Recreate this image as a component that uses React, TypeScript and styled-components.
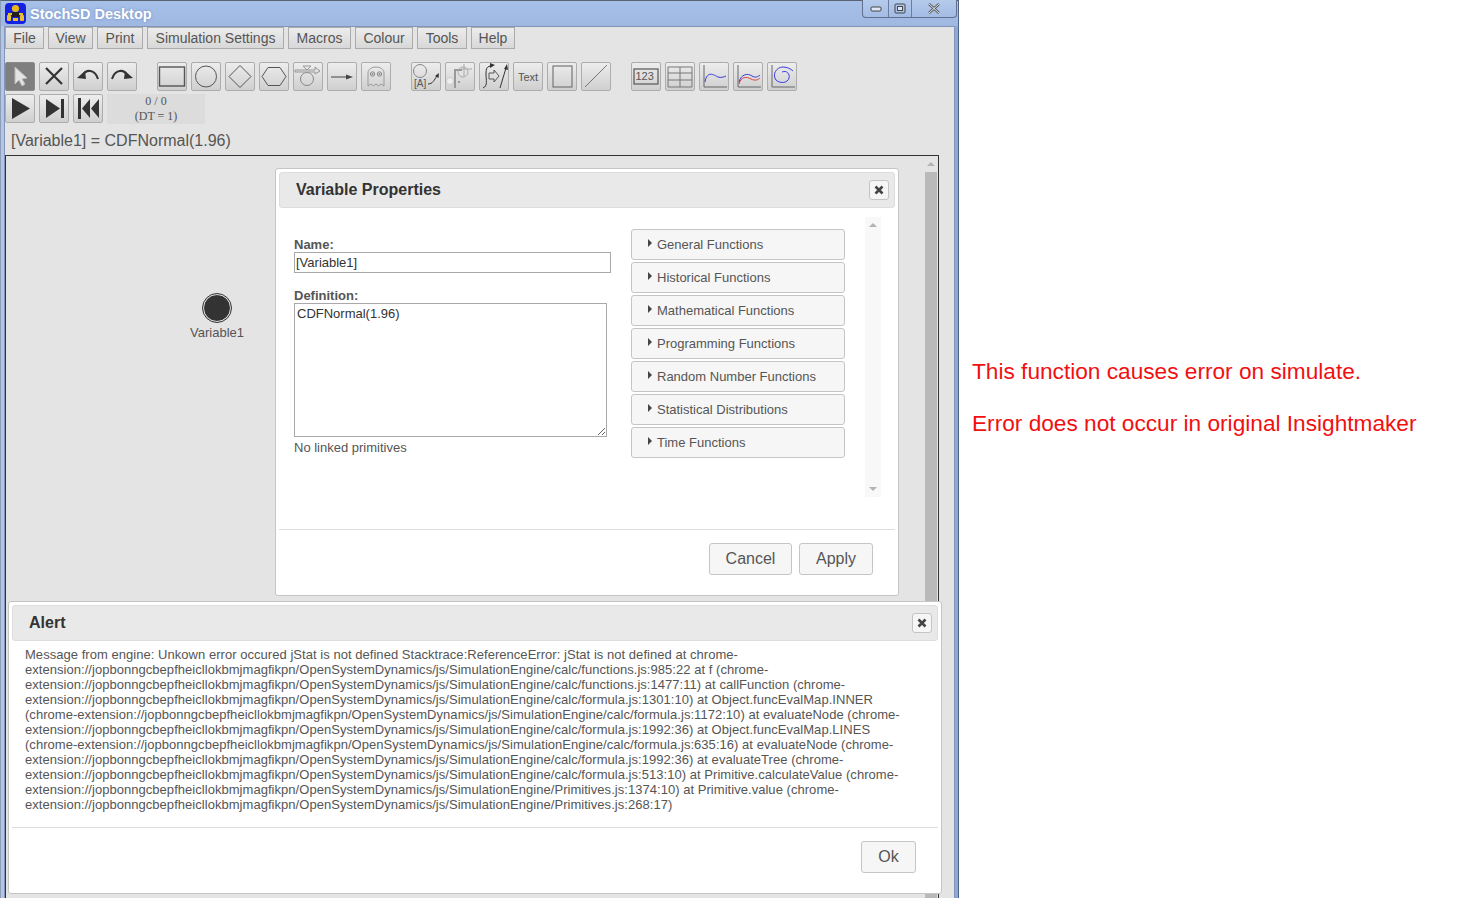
import React from 'react'
import styled, { createGlobalStyle } from 'styled-components'

const GlobalStyle = createGlobalStyle`
    html, body { margin: 0; padding: 0; background: #fff; }
    body { font-family: "Liberation Sans", Arial, sans-serif; overflow: hidden; }
`

const Page = styled.div`
    display: flex;
    width: 1462px;
    height: 898px;
    overflow: hidden;
`

const AppWindow = styled.div`
    position: relative;
    flex: 0 0 959px;
    height: 898px;
    display: flex;
    flex-direction: column;
    box-sizing: border-box;
    background: linear-gradient(90deg, #b4c6e6 0, #b4c6e6 3px, #8ea8da 3px);
    border-top: 1px solid #5a6472;
    border-left: 1px solid #8d9cb8;
    border-right: 1px solid #4f6185;
`

const TitleBar = styled.div`
    position: relative;
    flex: 0 0 25px;
    display: flex;
    align-items: center;
    padding-left: 4px;
    gap: 4px;
    background: linear-gradient(#a7c0e8, #9fb8e2);
`

const TitleText = styled.span`
    font-size: 14.5px;
    font-weight: bold;
    color: #fff;
    text-shadow: 0 0 3px #6f8cc0;
`

const WinButtons = styled.div`
    position: absolute;
    top: -1px;
    right: 1px;
    width: 95px;
    height: 18px;
    display: flex;
    box-sizing: border-box;
    border: 1px solid #61708c;
    border-top: none;
    border-radius: 0 0 4px 4px;
    background: linear-gradient(#b5cbec, #a3bce4);
`

const WinButton = styled.div<{ $w: number; $sep?: boolean }>`
    width: ${p => p.$w}px;
    display: flex;
    align-items: center;
    justify-content: center;
    box-sizing: border-box;
    border-right: ${p => (p.$sep ? '1px solid #6d7e9c' : 'none')};
`

const Client = styled.div`
    flex: 1;
    min-height: 0;
    display: flex;
    flex-direction: column;
    margin: 0 3px 0 3px;
    background: #e4e4e4;
    border: 1px solid #8296bb;
    border-bottom: none;
`

const MenuBar = styled.div`
    display: flex;
    gap: 4px;
    height: 22px;
`

const MenuButton = styled.button<{ $w: number }>`
    width: ${p => p.$w}px;
    height: 22px;
    box-sizing: border-box;
    padding: 0;
    border: 1px solid #ababab;
    background: linear-gradient(#ececec, #d8d8d8);
    color: #555;
    font: 14px "Liberation Sans", Arial, sans-serif;
`

const ToolRow = styled.div<{ $top: number }>`
    display: flex;
    gap: 4px;
    height: 29px;
    margin-top: ${p => p.$top}px;
`

const ToolButton = styled.button<{ $active?: boolean; $gapLeft?: number }>`
    flex: 0 0 30px;
    height: 29px;
    padding: 0;
    margin-left: ${p => p.$gapLeft || 0}px;
    box-sizing: border-box;
    display: flex;
    align-items: center;
    justify-content: center;
    border: 1px solid ${p => (p.$active ? '#8a8a8a' : '#adadad')};
    border-radius: 2px;
    background: ${p => (p.$active ? '#7f7f7f' : 'linear-gradient(#ededed, #cfcfcf)')};
    color: #555;
    font: 11px "Liberation Sans", Arial, sans-serif;
`

const TimeBox = styled.div`
    flex: 0 0 98px;
    height: 30px;
    background: #dcdcdc;
    color: #555;
    font: 12px/15px "Liberation Serif", "Times New Roman", serif;
    text-align: center;
`

const Status = styled.div`
    height: 32px;
    box-sizing: border-box;
    padding: 3px 0 0 6px;
    font-size: 16px;
    line-height: 29px;
    color: #555;
`

const Canvas = styled.div`
    flex: 1;
    min-height: 0;
    width: 934px;
    box-sizing: border-box;
    display: flex;
    border-top: 1px solid #333;
    border-left: 1px solid #333;
    border-right: 1px solid #333;
`

const Diagram = styled.div`
    position: relative;
    flex: 1;
`

const VariableNode = styled.div`
    position: absolute;
    left: 170px;
    top: 138px;
    width: 82px;
    display: flex;
    flex-direction: column;
    align-items: center;
    color: #555;
    font-size: 13px;
    line-height: 16px;
`

const NodeDot = styled.div`
    width: 26px;
    height: 26px;
    margin-bottom: 3px;
    border-radius: 50%;
    background: #333;
    border: 1px solid #e4e4e4;
    outline: 1px solid #333;
`

const ScrollTrack = styled.div`
    flex: 0 0 15px;
    display: flex;
    flex-direction: column;
    align-items: center;
`

const ScrollArrow = styled.div<{ $up?: boolean }>`
    flex: 0 0 16px;
    display: flex;
    align-items: center;
    justify-content: center;
    &::before {
        content: '';
        border-left: 4px solid transparent;
        border-right: 4px solid transparent;
        ${p => (p.$up ? 'border-bottom: 4px solid #b4b4b4;' : 'border-top: 4px solid #b4b4b4;')}
    }
`

const ScrollThumb = styled.div`
    flex: 1;
    width: 12px;
    background: #b9b9b9;
`

const Dialog = styled.div<{ $x: number; $y: number; $w: number; $h: number }>`
    position: absolute;
    left: ${p => p.$x}px;
    top: ${p => p.$y}px;
    width: ${p => p.$w}px;
    height: ${p => p.$h}px;
    box-sizing: border-box;
    display: flex;
    flex-direction: column;
    padding: 3px;
    background: #fff;
    border: 1px solid #c5c5c5;
    border-radius: 3px;
`

const DialogHeader = styled.div<{ $pad: number }>`
    flex: 0 0 36px;
    box-sizing: border-box;
    display: flex;
    align-items: center;
    justify-content: space-between;
    padding: 0 5px 0 ${p => p.$pad}px;
    background: #e9e9e9;
    border: 1px solid #ddd;
    border-radius: 3px;
`

const DialogTitle = styled.span`
    font-size: 16px;
    font-weight: bold;
    color: #333;
`

const CloseButton = styled.button`
    width: 20px;
    height: 20px;
    padding: 0;
    box-sizing: border-box;
    display: flex;
    align-items: center;
    justify-content: center;
    background: #f6f6f6;
    border: 1px solid #c5c5c5;
    border-radius: 3px;
`

const PropsBody = styled.div`
    flex: 1;
    min-height: 0;
    display: flex;
    padding: 9px 15px 0 15px;
`

const FormColumn = styled.div`
    flex: 0 0 317px;
    padding-top: 20px;
    font-size: 13px;
    color: #555;
`

const FieldLabel = styled.label`
    display: block;
    font-weight: bold;
    font-size: 13px;
    line-height: 15px;
    color: #555;
`

const NameInput = styled.input`
    display: block;
    width: 317px;
    height: 21px;
    box-sizing: border-box;
    padding: 0 1px;
    margin: 0 0 15px;
    border: 1px solid #a9a9a9;
    outline: none;
    color: #333;
    font: 13px "Liberation Sans", Arial, sans-serif;
`

const DefinitionInput = styled.textarea`
    display: block;
    width: 313px;
    height: 134px;
    box-sizing: border-box;
    padding: 2px;
    margin: 0;
    border: 1px solid #a9a9a9;
    outline: none;
    color: #333;
    font: 13px "Liberation Sans", Arial, sans-serif;
`

const LinkedNote = styled.div`
    margin-top: 3px;
    line-height: 15px;
`

const FunctionList = styled.div`
    flex: 0 0 214px;
    margin: 12px 0 0 20px;
    display: flex;
    flex-direction: column;
    gap: 2px;
`

const FunctionHeader = styled.div`
    height: 31px;
    box-sizing: border-box;
    display: flex;
    align-items: center;
    padding: 0 0 1px 16px;
    gap: 5px;
    background: #f6f6f6;
    border: 1px solid #c5c5c5;
    border-radius: 3px;
    color: #555;
    font-size: 13px;
`

const Caret = styled.span`
    width: 0;
    height: 0;
    margin-top: -2px;
    border-top: 4px solid transparent;
    border-bottom: 4px solid transparent;
    border-left: 4px solid #454545;
`

const InnerScroll = styled.div`
    flex: 0 0 16px;
    height: 280px;
    margin-left: 20px;
    display: flex;
    flex-direction: column;
    justify-content: space-between;
    background: #f8f8f8;
`

const DialogFooter = styled.div<{ $h: number; $pad: number }>`
    flex: 0 0 ${p => p.$h}px;
    box-sizing: border-box;
    display: flex;
    justify-content: flex-end;
    align-items: flex-start;
    gap: 7px;
    padding: 13px ${p => p.$pad}px 0 0;
    border-top: 1px solid #ddd;
`

const ActionButton = styled.button<{ $w: number }>`
    width: ${p => p.$w}px;
    height: 32px;
    padding: 0;
    background: #f6f6f6;
    border: 1px solid #c5c5c5;
    border-radius: 3px;
    color: #555;
    font: 16px "Liberation Sans", Arial, sans-serif;
`

const AlertBody = styled.div`
    flex: 1;
    padding: 6px 0 0 13px;
    font-size: 13px;
    line-height: 15px;
    letter-spacing: 0.04px;
    color: #555;
`

const AlertLine = styled.div`
    white-space: nowrap;
`

const Notes = styled.div`
    flex: 1;
    padding: 354px 0 0 13px;
    color: #f01010;
    font-size: 22.67px;
    line-height: 34px;
`

const Note = styled.div`
    margin-bottom: 18px;
    white-space: nowrap;
`

const menus: [string, number][] = [
    ['File', 39],
    ['View', 45],
    ['Print', 46],
    ['Simulation Settings', 137],
    ['Macros', 63],
    ['Colour', 58],
    ['Tools', 50],
    ['Help', 44],
]

const functionGroups = [
    'General Functions',
    'Historical Functions',
    'Mathematical Functions',
    'Programming Functions',
    'Random Number Functions',
    'Statistical Distributions',
    'Time Functions',
]

const alertLines = [
    'Message from engine: Unkown error occured jStat is not defined Stacktrace:ReferenceError: jStat is not defined at chrome-',
    'extension://jopbonngcbepfheicllokbmjmagfikpn/OpenSystemDynamics/js/SimulationEngine/calc/functions.js:985:22 at f (chrome-',
    'extension://jopbonngcbepfheicllokbmjmagfikpn/OpenSystemDynamics/js/SimulationEngine/calc/functions.js:1477:11) at callFunction (chrome-',
    'extension://jopbonngcbepfheicllokbmjmagfikpn/OpenSystemDynamics/js/SimulationEngine/calc/formula.js:1301:10) at Object.funcEvalMap.INNER',
    '(chrome-extension://jopbonngcbepfheicllokbmjmagfikpn/OpenSystemDynamics/js/SimulationEngine/calc/formula.js:1172:10) at evaluateNode (chrome-',
    'extension://jopbonngcbepfheicllokbmjmagfikpn/OpenSystemDynamics/js/SimulationEngine/calc/formula.js:1992:36) at Object.funcEvalMap.LINES',
    '(chrome-extension://jopbonngcbepfheicllokbmjmagfikpn/OpenSystemDynamics/js/SimulationEngine/calc/formula.js:635:16) at evaluateNode (chrome-',
    'extension://jopbonngcbepfheicllokbmjmagfikpn/OpenSystemDynamics/js/SimulationEngine/calc/formula.js:1992:36) at evaluateTree (chrome-',
    'extension://jopbonngcbepfheicllokbmjmagfikpn/OpenSystemDynamics/js/SimulationEngine/calc/formula.js:513:10) at Primitive.calculateValue (chrome-',
    'extension://jopbonngcbepfheicllokbmjmagfikpn/OpenSystemDynamics/js/SimulationEngine/Primitives.js:1374:10) at Primitive.value (chrome-',
    'extension://jopbonngcbepfheicllokbmjmagfikpn/OpenSystemDynamics/js/SimulationEngine/Primitives.js:268:17)',
]

// every toolbar drawing lives on a 28x27 grid
function Icon(props: { children: React.ReactNode }) {
    return (
        <svg width="28" height="27" viewBox="0 0 28 27" fill="none" stroke="#555">
            {props.children}
        </svg>
    )
}

function CloseIcon() {
    return (
        <svg width="10" height="10" viewBox="0 0 10 10">
            <path d="M1.5 1.5 8.5 8.5M8.5 1.5 1.5 8.5" stroke="#444" strokeWidth="2.6" />
        </svg>
    )
}

function Logo() {
    return (
        <svg width="21" height="21" viewBox="0 0 21 21">
            <rect x="0" y="0" width="21" height="21" rx="4" fill="#1520e0" />
            <circle cx="10.5" cy="5.5" r="3.6" fill="#e8b818" />
            <path d="M3 10h15v2H3z" fill="#e8c030" />
            <rect x="7" y="9" width="7" height="5" fill="#202020" />
            <rect x="2" y="12" width="4" height="6" rx="1" fill="#e8c030" />
            <rect x="15" y="12" width="4" height="6" rx="1" fill="#e8c030" />
            <rect x="8" y="15" width="5" height="3" fill="#e8c030" />
        </svg>
    )
}

export default function App() {
    return (
        <Page>
            <GlobalStyle />
            <AppWindow>
                <TitleBar>
                    <Logo />
                    <TitleText>StochSD Desktop</TitleText>
                    <WinButtons>
                        <WinButton $w={26} $sep>
                            <svg width="12" height="6" viewBox="0 0 12 6">
                                <rect x="1" y="1" width="10" height="4" rx="1" fill="#dfe8f6" stroke="#444" />
                            </svg>
                        </WinButton>
                        <WinButton $w={23} $sep>
                            <svg width="12" height="11" viewBox="0 0 12 11">
                                <rect x="1" y="1" width="10" height="9" rx="1" fill="none" stroke="#444" />
                                <rect x="3.5" y="3.5" width="5" height="4" fill="#dfe8f6" stroke="#444" />
                            </svg>
                        </WinButton>
                        <WinButton $w={44}>
                            <svg width="14" height="11" viewBox="0 0 14 11">
                                <path d="M2 1 12 10M12 1 2 10" stroke="#555" strokeWidth="2.4" />
                                <path d="M2 1 12 10M12 1 2 10" stroke="#e8eef8" strokeWidth="1" />
                            </svg>
                        </WinButton>
                    </WinButtons>
                </TitleBar>
                <Client>
                    <MenuBar>
                        {menus.map(([m, w]) => (
                            <MenuButton key={m} $w={w}>{m}</MenuButton>
                        ))}
                    </MenuBar>
                    <ToolRow $top={13}>
                        <ToolButton $active>
                            <Icon><path d="M9 4 V21 L13 17 L16 23 L19 21 L16 16 L21 15 Z" fill="#e4e4e4" stroke="#bbb" /></Icon>
                        </ToolButton>
                        <ToolButton>
                            <Icon><path d="M6 5 22 21M22 5 6 21" stroke="#333" strokeWidth="2.2" /></Icon>
                        </ToolButton>
                        <ToolButton>
                            <Icon>
                                <path d="M9 12 C12 6 21 6 24 16" stroke="#333" strokeWidth="2" />
                                <path d="M3 15 L11 8 L12 16 Z" fill="#333" stroke="none" />
                            </Icon>
                        </ToolButton>
                        <ToolButton>
                            <Icon>
                                <path d="M19 12 C16 6 7 6 4 16" stroke="#333" strokeWidth="2" />
                                <path d="M25 15 L17 8 L16 16 Z" fill="#333" stroke="none" />
                            </Icon>
                        </ToolButton>
                        <ToolButton $gapLeft={16}>
                            <Icon><rect x="1.5" y="4" width="25" height="19" strokeWidth="1.4" /></Icon>
                        </ToolButton>
                        <ToolButton>
                            <Icon><circle cx="14" cy="13.5" r="10.5" /></Icon>
                        </ToolButton>
                        <ToolButton>
                            <Icon><path d="M14 2.5 25 13.5 14 24.5 3 13.5Z" /></Icon>
                        </ToolButton>
                        <ToolButton>
                            <Icon><path d="M8 4.5H20L26 13.5 20 22.5H8L2 13.5Z" /></Icon>
                        </ToolButton>
                        <ToolButton>
                            <Icon>
                                <circle cx="13" cy="16" r="6.5" stroke="#888" />
                                <path d="M1 7H21V4L26 8 21 11V9H1Z" stroke="#999" fill="#e0e0e0" />
                                <path d="M9 3H17L13 7Z" stroke="#999" />
                            </Icon>
                        </ToolButton>
                        <ToolButton>
                            <Icon>
                                <path d="M3 14H20" stroke="#444" />
                                <path d="M18 11.5 25 14 18 16.5Z" fill="#444" stroke="none" />
                            </Icon>
                        </ToolButton>
                        <ToolButton>
                            <Icon>
                                <path d="M6 23V10C6 2 22 2 22 10V23L19 21 16.5 23 14 21 11.5 23 9 21Z" stroke="#999" />
                                <circle cx="10.5" cy="11" r="2.2" stroke="#888" />
                                <circle cx="17.5" cy="11" r="2.2" stroke="#888" />
                                <circle cx="10.5" cy="11" r=".8" fill="#555" stroke="none" />
                                <circle cx="17.5" cy="11" r=".8" fill="#555" stroke="none" />
                            </Icon>
                        </ToolButton>
                        <ToolButton $gapLeft={16}>
                            <Icon>
                                <circle cx="8" cy="8" r="6.5" stroke="#888" />
                                <text x="2" y="24" fontSize="10" fill="#555" stroke="none" fontFamily="Liberation Sans">[A]</text>
                                <path d="M16 21C21 21 22 17 25 13" stroke="#333" />
                                <path d="M23 13 27 10 26.5 15Z" fill="#333" stroke="none" />
                            </Icon>
                        </ToolButton>
                        <ToolButton>
                            <Icon>
                                <path d="M9 25V7H16" stroke="#999" strokeWidth="2" />
                                <circle cx="4" cy="18" r="3.5" fill="#eee" stroke="#ccc" />
                                <circle cx="17" cy="9" r="5" stroke="#aaa" />
                                <path d="M15 6H22L26 6M18 1V13" stroke="#aaa" />
                                <circle cx="13" cy="19" r="1" fill="#888" stroke="none" />
                            </Icon>
                        </ToolButton>
                        <ToolButton>
                            <Icon>
                                <path d="M3 25C8 23 6 17 6 11S7 3 12 3" stroke="#333" />
                                <path d="M10 0 15 2 10 5Z" fill="#333" stroke="none" />
                                <path d="M9 10H14V7L19 13 14 19V16H9Z" stroke="#555" />
                                <path d="M20 25 26 5" stroke="#333" />
                                <path d="M24 6 27 1 28 7Z" fill="#333" stroke="none" />
                            </Icon>
                        </ToolButton>
                        <ToolButton>Text</ToolButton>
                        <ToolButton>
                            <Icon><rect x="5" y="3" width="19" height="21" strokeWidth="1.2" stroke="#777" /></Icon>
                        </ToolButton>
                        <ToolButton>
                            <Icon><path d="M3 24 25 2" stroke="#777" /></Icon>
                        </ToolButton>
                        <ToolButton $gapLeft={16}>
                            <Icon>
                                <rect x="2" y="6" width="24" height="15" strokeWidth="1.2" />
                                <text x="3.5" y="17" fontSize="11" fill="#555" stroke="none" fontFamily="Liberation Sans">123</text>
                            </Icon>
                        </ToolButton>
                        <ToolButton>
                            <Icon>
                                <path d="M2 4H26V24H2ZM2 10H26M2 17H26M14 4V24" stroke="#777" />
                            </Icon>
                        </ToolButton>
                        <ToolButton>
                            <Icon>
                                <path d="M4 2V24H27" stroke="#666" />
                                <path d="M5 19C7 7 14 12 18 14 21 15 24 14 26 13" stroke="#3a3ae0" />
                            </Icon>
                        </ToolButton>
                        <ToolButton>
                            <Icon>
                                <path d="M4 2V24H27" stroke="#666" />
                                <path d="M5 19C7 11 14 10 18 13 21 15 24 14 26 12" stroke="#3a3ae0" />
                                <path d="M5 21C7 14 12 13 17 16 21 18 24 17 26 15" stroke="#e04040" />
                            </Icon>
                        </ToolButton>
                        <ToolButton>
                            <Icon>
                                <path d="M4 2V24H27" stroke="#666" />
                                <path d="M14 9C19 7 22 11 21 15 20 20 12 21 8 17 4 12 8 4 15 4 19 4 23 6 25 8" stroke="#3a3ae0" />
                            </Icon>
                        </ToolButton>
                    </ToolRow>
                    <ToolRow $top={3}>
                        <ToolButton>
                            <Icon><path d="M6 3 24 13.5 6 24Z" fill="#333" stroke="none" /></Icon>
                        </ToolButton>
                        <ToolButton>
                            <Icon>
                                <path d="M6 4 20 13.5 6 23Z" fill="#333" stroke="none" />
                                <rect x="21" y="4" width="3" height="19" fill="#333" stroke="none" />
                            </Icon>
                        </ToolButton>
                        <ToolButton>
                            <Icon>
                                <rect x="4" y="3" width="3" height="21" fill="#333" stroke="none" />
                                <path d="M16 4 8 13.5 16 23ZM25 4 17 13.5 25 23Z" fill="#333" stroke="none" />
                            </Icon>
                        </ToolButton>
                        <TimeBox>0 / 0<br />(DT = 1)</TimeBox>
                    </ToolRow>
                    <Status>[Variable1] = CDFNormal(1.96)</Status>
                    <Canvas>
                        <Diagram>
                            <VariableNode>
                                <NodeDot />
                                Variable1
                            </VariableNode>
                        </Diagram>
                        <ScrollTrack>
                            <ScrollArrow $up />
                            <ScrollThumb />
                        </ScrollTrack>
                    </Canvas>
                </Client>

                <Dialog $x={274} $y={167} $w={624} $h={428}>
                    <DialogHeader $pad={16}>
                        <DialogTitle>Variable Properties</DialogTitle>
                        <CloseButton><CloseIcon /></CloseButton>
                    </DialogHeader>
                    <PropsBody>
                        <FormColumn>
                            <FieldLabel>Name:</FieldLabel>
                            <NameInput readOnly value="[Variable1]" />
                            <FieldLabel>Definition:</FieldLabel>
                            <DefinitionInput readOnly value="CDFNormal(1.96)" />
                            <LinkedNote>No linked primitives</LinkedNote>
                        </FormColumn>
                        <FunctionList>
                            {functionGroups.map(g => (
                                <FunctionHeader key={g}><Caret />{g}</FunctionHeader>
                            ))}
                        </FunctionList>
                        <InnerScroll>
                            <ScrollArrow $up />
                            <ScrollArrow />
                        </InnerScroll>
                    </PropsBody>
                    <DialogFooter $h={63} $pad={22}>
                        <ActionButton $w={83}>Cancel</ActionButton>
                        <ActionButton $w={74}>Apply</ActionButton>
                    </DialogFooter>
                </Dialog>

                <Dialog $x={7} $y={600} $w={934} $h={293}>
                    <DialogHeader $pad={16}>
                        <DialogTitle>Alert</DialogTitle>
                        <CloseButton><CloseIcon /></CloseButton>
                    </DialogHeader>
                    <AlertBody>
                        {alertLines.map((l, i) => <AlertLine key={i}>{l}</AlertLine>)}
                    </AlertBody>
                    <DialogFooter $h={63} $pad={22}>
                        <ActionButton $w={55}>Ok</ActionButton>
                    </DialogFooter>
                </Dialog>
            </AppWindow>
            <Notes>
                <Note>This function causes error on simulate.</Note>
                <Note>Error does not occur in original Insightmaker</Note>
            </Notes>
        </Page>
    )
}
